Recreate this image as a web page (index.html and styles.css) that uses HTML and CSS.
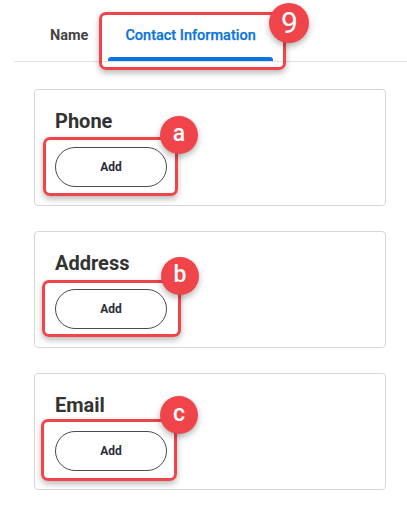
FILE: index.html
```html
<!DOCTYPE html>
<html lang="en">
<head>
<meta charset="utf-8">
<title>Contact Information</title>
<link rel="stylesheet" href="styles.css">
</head>
<body>
<nav class="tabs">
  <div class="tab">Name</div>
  <div class="tab tab-active">Contact Information
    <span class="callout callout-tab"></span>
    <span class="badge badge-big">9</span>
  </div>
</nav>
<main class="cards">
  <section class="card">
    <h2 class="card-title">Phone</h2>
    <div class="action">
      <button class="btn">Add</button>
      <span class="callout callout-a"></span>
      <span class="badge badge-a">a</span>
    </div>
  </section>
  <section class="card">
    <h2 class="card-title">Address</h2>
    <div class="action">
      <button class="btn">Add</button>
      <span class="callout callout-b"></span>
      <span class="badge badge-b">b</span>
    </div>
  </section>
  <section class="card">
    <h2 class="card-title">Email</h2>
    <div class="action">
      <button class="btn">Add</button>
      <span class="callout callout-c"></span>
      <span class="badge badge-c">c</span>
    </div>
  </section>
</main>
</body>
</html>
```
FILE: styles.css
```css
* { box-sizing: border-box; }
html, body { margin: 0; padding: 0; background: #fff; }
body {
  font-family: Roboto, "Liberation Sans", Arial, sans-serif;
  color: #333;
  width: 407px;
  height: 520px;
  overflow: hidden;
}
.tabs {
  display: flex;
  gap: 3px;
  margin-left: 14px;
  padding-left: 19px;
  height: 62px;
  border-bottom: 1px solid #dfe1e3;
}
.tab {
  position: relative;
  padding: 26px 17px 0;
  font-size: 14.5px;
  line-height: 20px;
  font-weight: 700;
  color: #444;
}
.tab-active {
  color: #0b74de;
  font-weight: 500;
  -webkit-text-stroke: 0.25px #0b74de;
}
.tab-active::after {
  content: "";
  position: absolute;
  left: 0;
  right: 0;
  bottom: 0;
  height: 4px;
  background: #0875e1;
  border-radius: 3px 3px 0 0;
}
.callout {
  position: absolute;
  border: 3px solid #f0444b;
  border-radius: 7px;
  box-shadow: 0 3px 6px rgba(0, 0, 0, 0.28);
  pointer-events: none;
}
.callout-tab { left: -9px; right: -13px; top: 12px; bottom: -9px; }
.badge {
  position: absolute;
  width: 38px;
  height: 38px;
  border-radius: 50%;
  background: #f0444b;
  color: #fff;
  font-size: 23px;
  line-height: 36px;
  font-weight: 500;
  text-align: center;
  box-shadow: 0 3px 6px rgba(0, 0, 0, 0.3);
}
.badge-big {
  width: 40px;
  height: 40px;
  left: 161px;
  top: 3px;
  font-size: 30px;
  line-height: 39px;
  font-weight: 400;
  -webkit-text-stroke: 0;
}
.cards {
  display: flex;
  flex-direction: column;
  gap: 25px;
  padding: 27px 0 0 34px;
}
.card {
  width: 352px;
  height: 117px;
  border: 1px solid #d4d7db;
  border-radius: 4px;
  padding: 19px 20px 0;
}
.card-title {
  margin: 0 0 14px;
  font-size: 20px;
  line-height: 24px;
  font-weight: 700;
  color: #333;
}
.action {
  position: relative;
  width: 112px;
  height: 40px;
}
.btn {
  display: block;
  width: 112px;
  height: 40px;
  border: 1px solid #4a4a4a;
  border-radius: 20px;
  background: #fff;
  font-family: Roboto, "Liberation Sans", Arial, sans-serif;
  font-size: 12px;
  font-weight: 700;
  color: #2b2b3a;
  padding: 0;
}
.callout-a { left: -12px; right: -11px; top: -10px; bottom: -9px; }
.callout-b { left: -13px; right: -14px; top: -9px; bottom: -8px; }
.callout-c { left: -14px; right: -10px; top: -12px; bottom: -10px; }
.badge-a { left: 105px; top: -31px; }
.badge-b { left: 106px; top: -32px; }
.badge-c { left: 105px; top: -35px; }
```
